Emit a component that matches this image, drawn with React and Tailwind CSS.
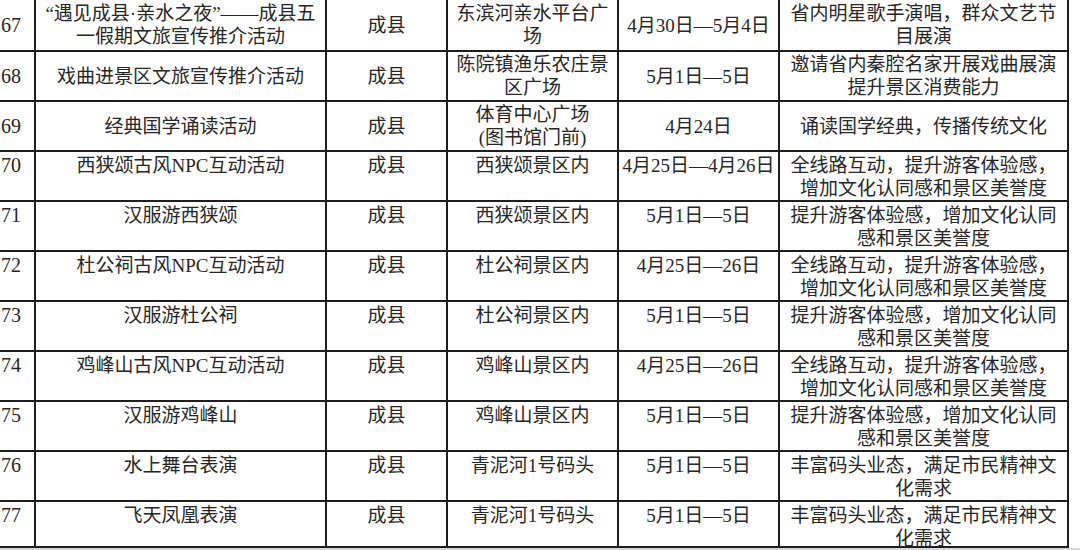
import React from "react";

// Rows of the event schedule (scanned table, rows 67–77)
const rows = [
  {
    n: 67,
    name: ["“遇见成县·亲水之夜”——成县五", "一假期文旅宣传推介活动"],
    loc: ["东滨河亲水平台广", "场"],
    date: "4月30日—5月4日",
    desc: ["省内明星歌手演唱，群众文艺节", "目展演"],
    middle: true,
  },
  {
    n: 68,
    name: ["戏曲进景区文旅宣传推介活动"],
    loc: ["陈院镇渔乐农庄景", "区广场"],
    date: "5月1日—5日",
    desc: ["邀请省内秦腔名家开展戏曲展演", "提升景区消费能力"],
    middle: true,
  },
  {
    n: 69,
    name: ["经典国学诵读活动"],
    loc: ["体育中心广场", "(图书馆门前)"],
    date: "4月24日",
    desc: ["诵读国学经典，传播传统文化"],
    middle: true,
  },
  {
    n: 70,
    name: ["西狭颂古风NPC互动活动"],
    loc: ["西狭颂景区内"],
    date: "4月25日—4月26日",
    desc: ["全线路互动，提升游客体验感，", "增加文化认同感和景区美誉度"],
  },
  {
    n: 71,
    name: ["汉服游西狭颂"],
    loc: ["西狭颂景区内"],
    date: "5月1日—5日",
    desc: ["提升游客体验感，增加文化认同", "感和景区美誉度"],
  },
  {
    n: 72,
    name: ["杜公祠古风NPC互动活动"],
    loc: ["杜公祠景区内"],
    date: "4月25日—26日",
    desc: ["全线路互动，提升游客体验感，", "增加文化认同感和景区美誉度"],
  },
  {
    n: 73,
    name: ["汉服游杜公祠"],
    loc: ["杜公祠景区内"],
    date: "5月1日—5日",
    desc: ["提升游客体验感，增加文化认同", "感和景区美誉度"],
  },
  {
    n: 74,
    name: ["鸡峰山古风NPC互动活动"],
    loc: ["鸡峰山景区内"],
    date: "4月25日—26日",
    desc: ["全线路互动，提升游客体验感，", "增加文化认同感和景区美誉度"],
  },
  {
    n: 75,
    name: ["汉服游鸡峰山"],
    loc: ["鸡峰山景区内"],
    date: "5月1日—5日",
    desc: ["提升游客体验感，增加文化认同", "感和景区美誉度"],
  },
  {
    n: 76,
    name: ["水上舞台表演"],
    loc: ["青泥河1号码头"],
    date: "5月1日—5日",
    desc: ["丰富码头业态，满足市民精神文", "化需求"],
  },
  {
    n: 77,
    name: ["飞天凤凰表演"],
    loc: ["青泥河1号码头"],
    date: "5月1日—5日",
    desc: ["丰富码头业态，满足市民精神文", "化需求"],
    last: true,
  },
];

function Lines({ items }) {
  return items.map((t, i) => (
    <div key={i} className="whitespace-nowrap">
      {t}
    </div>
  ));
}

function Row({ r, first }) {
  // first three rows are vertically centred, the rest sit at the top
  const cell = r.middle
    ? "flex flex-col items-center justify-center text-center border-r-2 border-[#1e1e1e]"
    : "pt-[2px] text-center border-r-2 border-[#1e1e1e]";
  const height = first ? "h-[52px]" : r.last ? "h-[46px]" : "h-[50px]";

  return (
    <div
      className={`grid grid-cols-[36px_291px_121px_171px_161px_289px] border-b-2 border-[#1e1e1e] ${height}`}
    >
      <div
        className={`${
          r.middle ? "flex items-center" : "pt-[2px]"
        } pl-[1px] text-[20px] border-r-2 border-[#1e1e1e]`}
      >
        {r.n}
      </div>
      <div className={cell}>
        <Lines items={r.name} />
      </div>
      <div className={cell}>
        <div>成县</div>
      </div>
      <div className={cell}>
        <Lines items={r.loc} />
      </div>
      <div className={cell}>
        <div className="whitespace-nowrap">{r.date}</div>
      </div>
      <div className={cell}>
        <Lines items={r.desc} />
      </div>
    </div>
  );
}

export default function App() {
  return (
    <div
      className="w-[1080px] h-[550px] overflow-hidden bg-white flex flex-col text-[#262626] text-[19px] leading-[23px]"
      style={{ fontFamily: '"Liberation Serif", "Noto Sans CJK SC", serif' }}
    >
      <div className="w-[1069px]">
        {rows.map((r, i) => (
          <Row key={r.n} r={r} first={i === 0} />
        ))}
      </div>
      <div className="flex-1 bg-[#d6d6d6]" />
    </div>
  );
}
